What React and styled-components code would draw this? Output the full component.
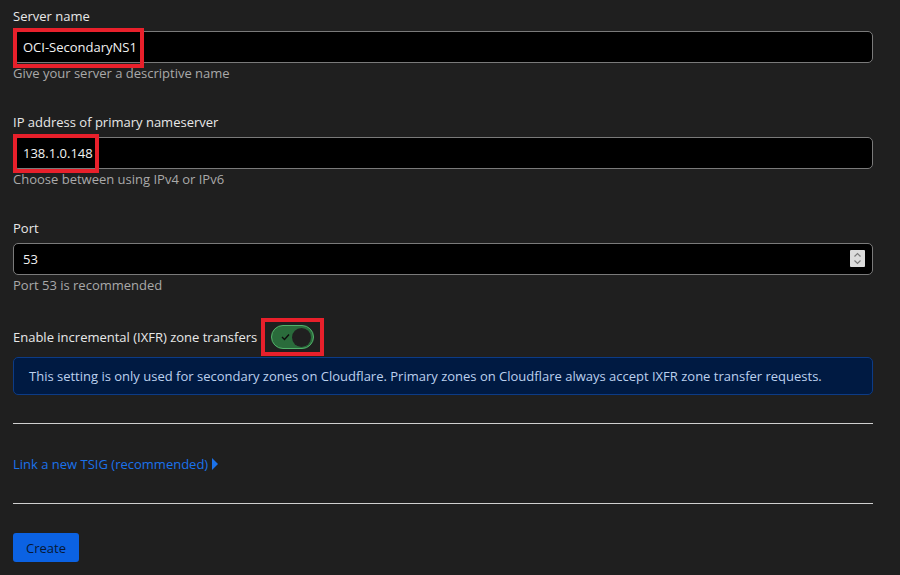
import React from 'react';
import styled, { createGlobalStyle } from 'styled-components';

const GlobalStyle = createGlobalStyle`
  html, body {
    margin: 0;
    padding: 0;
    background: #1f1f1f;
  }
  body {
    font-family: "Open Sans", "Noto Sans", sans-serif;
    font-size: 13px;
    color: #e6e6e6;
  }
`;

const Page = styled.div`
  width: 860px;
  padding: 6px 0 0 13px;
  display: flex;
  flex-direction: column;
  min-height: 569px;
`;

const Field = styled.div`
  display: flex;
  flex-direction: column;
  margin-bottom: ${(p) => p.$gap || 28}px;
`;

const Label = styled.label`
  line-height: 20px;
  color: #e8e8e8;
  margin-bottom: 5px;
`;

const InputWrap = styled.div`
  position: relative;
`;

const Input = styled.input`
  box-sizing: border-box;
  width: 100%;
  height: 32px;
  background: #000;
  border: 1px solid #7a7a7a;
  border-radius: 5px;
  color: #f2f2f2;
  font: inherit;
  padding: 0 9px;
  outline: none;
`;

const Hint = styled.div`
  line-height: 21px;
  color: #a9a9a9;
`;

const Highlight = styled.div`
  position: absolute;
  left: ${(p) => p.$left}px;
  top: ${(p) => p.$top}px;
  width: ${(p) => p.$w}px;
  height: ${(p) => p.$h}px;
  border: 4px solid #e8202b;
  box-sizing: border-box;
  pointer-events: none;
`;

const Spinner = styled.div`
  position: absolute;
  right: 8px;
  top: 7px;
  width: 15px;
  height: 17px;
  background: #dcdcdc;
  border-radius: 1px;
  display: flex;
  align-items: center;
  justify-content: center;
`;

const ToggleRow = styled.div`
  display: flex;
  align-items: center;
  gap: 14px;
  height: 24px;
  margin-bottom: 8px;
`;

const ToggleText = styled.span`
  color: #e8e8e8;
`;

const ToggleBox = styled.div`
  position: relative;
`;

const Switch = styled.div`
  box-sizing: border-box;
  width: 43px;
  height: 24px;
  border-radius: 12px;
  background: #2a6b3b;
  border: 1px solid #52b26a;
  display: flex;
  align-items: center;
  justify-content: space-between;
  padding: 0 2px 0 9px;
`;

const Knob = styled.div`
  width: 19px;
  height: 19px;
  border-radius: 50%;
  background: #202020;
`;

const Info = styled.div`
  box-sizing: border-box;
  height: 38px;
  display: flex;
  align-items: center;
  padding: 0 15px;
  background: #001a42;
  border: 1px solid #0c3b86;
  border-radius: 5px;
  color: #bcd0ee;
  margin-bottom: 28px;
`;

const Rule = styled.hr`
  width: 100%;
  margin: 0;
  border: none;
  border-top: 1px solid #d0d0d0;
`;

const Link = styled.a`
  display: flex;
  align-items: center;
  gap: 4px;
  line-height: 20px;
  margin: 30px 0 29px;
  color: #1b72eb;
  text-decoration: none;
  cursor: pointer;
`;

const Button = styled.button`
  align-self: flex-start;
  margin-top: 29px;
  height: 29px;
  padding: 0 13px;
  background: #0b62e3;
  color: #071835;
  border: none;
  border-radius: 3px;
  font: inherit;
`;

export default function App() {
  return (
    <>
      <GlobalStyle />
      <Page>
        <Field>
          <Label>Server name</Label>
          <InputWrap>
            <Input defaultValue="OCI-SecondaryNS1" />
            <Highlight $left={0} $top={-3} $w={131} $h={40} />
          </InputWrap>
          <Hint>Give your server a descriptive name</Hint>
        </Field>

        <Field>
          <Label>IP address of primary nameserver</Label>
          <InputWrap>
            <Input defaultValue="138.1.0.148" />
            <Highlight $left={0} $top={-3} $w={86} $h={39} />
          </InputWrap>
          <Hint>Choose between using IPv4 or IPv6</Hint>
        </Field>

        <Field $gap={29}>
          <Label>Port</Label>
          <InputWrap>
            <Input defaultValue="53" />
            <Spinner>
              <svg width="9" height="13" viewBox="0 0 9 13" fill="none" stroke="#7a7a7a" strokeWidth="1.2">
                <path d="M1.5 4.5 L4.5 1.5 L7.5 4.5" />
                <path d="M1.5 8.5 L4.5 11.5 L7.5 8.5" />
              </svg>
            </Spinner>
          </InputWrap>
          <Hint>Port 53 is recommended</Hint>
        </Field>

        <ToggleRow>
          <ToggleText>Enable incremental (IXFR) zone transfers</ToggleText>
          <ToggleBox>
            <Switch>
              <svg width="9" height="8" viewBox="0 0 9 8" fill="none" stroke="#0d0d0d" strokeWidth="1.4">
                <path d="M1 4 L3.5 6.5 L8 1.5" />
              </svg>
              <Knob />
            </Switch>
            <Highlight $left={-10} $top={-7} $w={63} $h={38} />
          </ToggleBox>
        </ToggleRow>

        <Info>
          This setting is only used for secondary zones on Cloudflare. Primary zones on Cloudflare always accept IXFR zone transfer requests.
        </Info>

        <Rule />
        <Link>
          Link a new TSIG (recommended)
          <svg width="6" height="12" viewBox="0 0 6 12">
            <path d="M0 0 L6 6 L0 12 Z" fill="#1b72eb" />
          </svg>
        </Link>
        <Rule />

        <Button>Create</Button>
      </Page>
    </>
  );
}
